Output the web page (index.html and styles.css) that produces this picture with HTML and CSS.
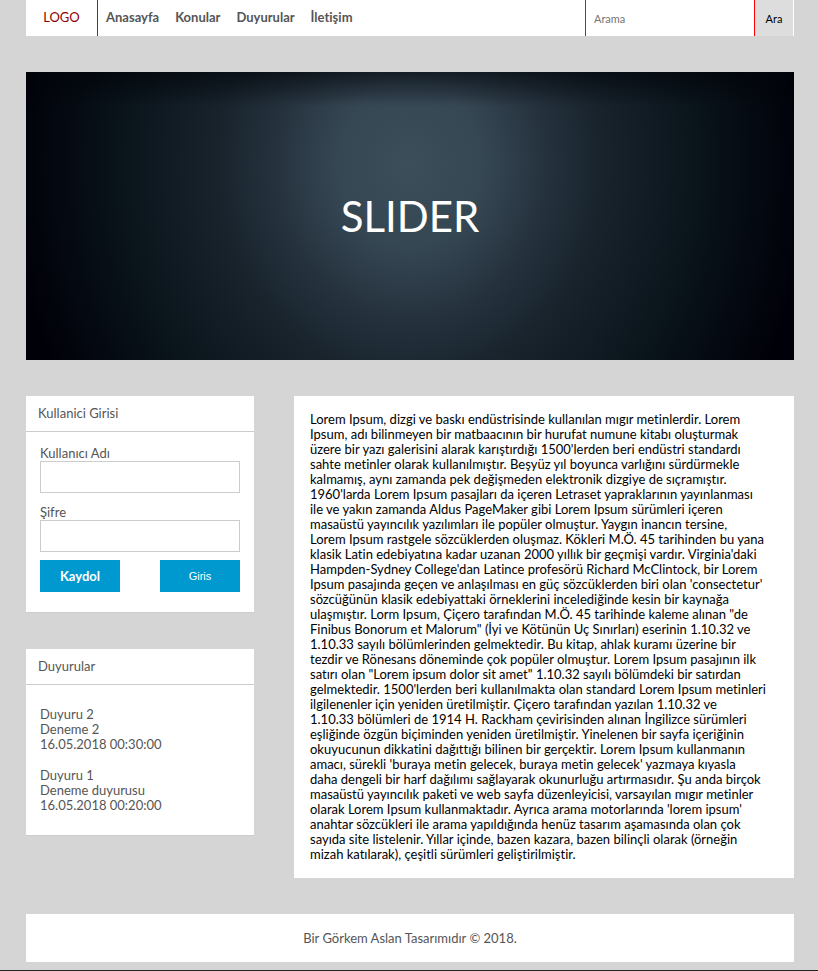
FILE: index.html
```html
<!DOCTYPE html>
<html lang="tr">
<head>
<meta charset="utf-8">
<title>Anasayfa</title>
<link rel="stylesheet" href="styles.css">
</head>
<body>
<div class="page">
  <header class="topbar">
    <a class="logo" href="#">LOGO</a>
    <nav class="menu">
      <a href="#">Anasayfa</a>
      <a href="#">Konular</a>
      <a href="#">Duyurular</a>
      <a href="#">İletişim</a>
    </nav>
    <form class="search">
      <input type="text" placeholder="Arama" aria-label="Arama">
      <button type="button">Ara</button>
    </form>
  </header>

  <section class="slider"><h1>SLIDER</h1></section>

  <div class="columns">
    <aside class="sidebar">
      <section class="card">
        <h2>Kullanici Girisi</h2>
        <form class="login">
          <label for="user">Kullanıcı Adı</label>
          <input id="user" type="text">
          <label for="pass">Şifre</label>
          <input id="pass" type="password">
          <div class="actions">
            <a class="register" href="#">Kaydol</a>
            <button type="button">Giris</button>
          </div>
        </form>
      </section>
      <section class="card">
        <h2>Duyurular</h2>
        <div class="notices">
          <p>Duyuru 2<br>Deneme 2<br>16.05.2018 00:30:00</p>
          <p>Duyuru 1<br>Deneme duyurusu<br>16.05.2018 00:20:00</p>
        </div>
      </section>
    </aside>

    <main class="content">
      <p>Lorem Ipsum, dizgi ve baskı endüstrisinde kullanılan mıgır metinlerdir. Lorem<br>
      Ipsum, adı bilinmeyen bir matbaacının bir hurufat numune kitabı oluşturmak<br>
      üzere bir yazı galerisini alarak karıştırdığı 1500'lerden beri endüstri standardı<br>
      sahte metinler olarak kullanılmıştır. Beşyüz yıl boyunca varlığını sürdürmekle<br>
      kalmamış, aynı zamanda pek değişmeden elektronik dizgiye de sıçramıştır.<br>
      1960'larda Lorem Ipsum pasajları da içeren Letraset yapraklarının yayınlanması<br>
      ile ve yakın zamanda Aldus PageMaker gibi Lorem Ipsum sürümleri içeren<br>
      masaüstü yayıncılık yazılımları ile popüler olmuştur. Yaygın inancın tersine,<br>
      Lorem Ipsum rastgele sözcüklerden oluşmaz. Kökleri M.Ö. 45 tarihinden bu yana<br>
      klasik Latin edebiyatına kadar uzanan 2000 yıllık bir geçmişi vardır. Virginia'daki<br>
      Hampden-Sydney College'dan Latince profesörü Richard McClintock, bir Lorem<br>
      Ipsum pasajında geçen ve anlaşılması en güç sözcüklerden biri olan 'consectetur'<br>
      sözcüğünün klasik edebiyattaki örneklerini incelediğinde kesin bir kaynağa<br>
      ulaşmıştır. Lorm Ipsum, Çiçero tarafından M.Ö. 45 tarihinde kaleme alınan "de<br>
      Finibus Bonorum et Malorum" (İyi ve Kötünün Uç Sınırları) eserinin 1.10.32 ve<br>
      1.10.33 sayılı bölümlerinden gelmektedir. Bu kitap, ahlak kuramı üzerine bir<br>
      tezdir ve Rönesans döneminde çok popüler olmuştur. Lorem Ipsum pasajının ilk<br>
      satırı olan "Lorem ipsum dolor sit amet" 1.10.32 sayılı bölümdeki bir satırdan<br>
      gelmektedir. 1500'lerden beri kullanılmakta olan standard Lorem Ipsum metinleri<br>
      ilgilenenler için yeniden üretilmiştir. Çiçero tarafından yazılan 1.10.32 ve<br>
      1.10.33 bölümleri de 1914 H. Rackham çevirisinden alınan İngilizce sürümleri<br>
      eşliğinde özgün biçiminden yeniden üretilmiştir. Yinelenen bir sayfa içeriğinin<br>
      okuyucunun dikkatini dağıttığı bilinen bir gerçektir. Lorem Ipsum kullanmanın<br>
      amacı, sürekli 'buraya metin gelecek, buraya metin gelecek' yazmaya kıyasla<br>
      daha dengeli bir harf dağılımı sağlayarak okunurluğu artırmasıdır. Şu anda birçok<br>
      masaüstü yayıncılık paketi ve web sayfa düzenleyicisi, varsayılan mıgır metinler<br>
      olarak Lorem Ipsum kullanmaktadır. Ayrıca arama motorlarında 'lorem ipsum'<br>
      anahtar sözcükleri ile arama yapıldığında henüz tasarım aşamasında olan çok<br>
      sayıda site listelenir. Yıllar içinde, bazen kazara, bazen bilinçli olarak (örneğin<br>
      mizah katılarak), çeşitli sürümleri geliştirilmiştir.</p>
    </main>
  </div>

  <footer class="footer">Bir Görkem Aslan Tasarımıdır © 2018.</footer>
</div>
</body>
</html>
```
FILE: styles.css
```css
* {
  box-sizing: border-box;
}

body {
  margin: 0;
  background: #d5d5d5;
  color: #555;
  font: 13px/15px "Trebuchet MS", Lato, sans-serif;
  font-variant-ligatures: none;
}

h1, h2, p {
  margin: 0;
  font-weight: 400;
}

a {
  color: inherit;
  text-decoration: none;
}

input, button {
  margin: 0;
  border: 0;
  border-radius: 0;
  font: inherit;
}

.page {
  display: flex;
  flex-direction: column;
  gap: 36px;
  padding: 0 24px 8px 26px;
  border-bottom: 1px solid #222;
}

.topbar {
  display: flex;
  height: 36px;
  background: #fff;
  line-height: 35px;
}

.logo {
  width: 72px;
  border-right: 1px solid #e00000;
  color: #900000;
  text-align: center;
}

.menu {
  display: flex;
  flex: 1;
  gap: 16px;
  padding-left: 8px;
  font-weight: 700;
}

.search {
  display: flex;
  padding-right: 1px;
}

.search input {
  width: 170px;
  padding: 0 8px;
  border: solid #f00;
  border-width: 0 1px;
  background: #fff;
  font-size: 11px;
}

.search input::placeholder {
  color: #757575;
}

.search button {
  width: 38px;
  padding: 0;
  background: #ddd;
  color: #000;
  font-size: 11px;
}

.slider {
  display: flex;
  align-items: center;
  justify-content: center;
  height: 288px;
  background:
    linear-gradient(rgba(0, 3, 8, 0.6), rgba(0, 3, 8, 0) 12%),
    radial-gradient(ellipse 52% 158% at 50% 32%, #3d4e5b 0%, #364754 18%, #25323e 34%, #18232c 48%, #0a141b 72%, #000008 100%);
}

.slider h1 {
  color: #fff;
  font-size: 42px;
  line-height: 48px;
}

.columns {
  display: flex;
  align-items: flex-start;
  gap: 40px;
}

.sidebar {
  display: flex;
  flex: 0 0 228px;
  flex-direction: column;
  gap: 36px;
}

.card {
  border-bottom: 1px solid #ccc;
  background: #fff;
}

.card h2 {
  padding: 0 12px;
  border-bottom: 1px solid #ccc;
  font-size: 13px;
  line-height: 35px;
}

.login {
  display: flex;
  flex-direction: column;
  padding: 14px 14px 20px;
}

.login input {
  height: 32px;
  margin-bottom: 12px;
  padding: 0 8px;
  border: 1px solid #ccc;
  background: #fff;
}

.login input:last-of-type {
  margin-bottom: 8px;
}

.actions {
  display: flex;
  justify-content: space-between;
}

.actions a, .actions button {
  width: 80px;
  height: 32px;
  background: #0099cf;
  color: #fff;
  font-weight: 700;
  line-height: 32px;
  text-align: center;
}

.actions button {
  padding: 0;
  font: 11px/32px "Liberation Sans", sans-serif;
}

.notices {
  display: flex;
  flex-direction: column;
  gap: 16px;
  padding: 22px 14px;
}

.content {
  flex: 1;
  padding: 16px;
  background: #fff;
  color: #000;
  white-space: nowrap;
}

.footer {
  background: #fff;
  line-height: 48px;
  text-align: center;
}
```
